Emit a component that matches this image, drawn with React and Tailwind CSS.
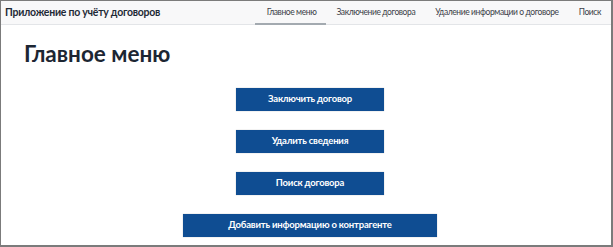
export default function App() {
  const tabs = ["Главное меню", "Заключение договора", "Удаление информации о договоре", "Поиск"];
  const buttons = [
    { label: "Заключить договор", w: "w-[148px]" },
    { label: "Удалить сведения", w: "w-[148px]" },
    { label: "Поиск договора", w: "w-[148px]" },
    { label: "Добавить информацию о контрагенте", w: "w-[254px]" },
  ];

  return (
    <div
      className="w-[613px] h-[247px] box-border border-l border-t border-r-2 border-b-2 border-[#7b7b7b] bg-white overflow-hidden"
      style={{ fontFamily: 'Lato, "Noto Sans", sans-serif' }}
    >
      <header className="h-[24px] flex items-stretch justify-between bg-[#f8f8f9] border-b border-[#e3e5e8]">
        <div className="pl-[4px] flex items-center whitespace-nowrap text-[10.5px] tracking-[-0.25px] font-bold text-[#1e2a36]">
          Приложение по учёту договоров
        </div>
        <nav className="flex items-stretch">
          {tabs.map((t, i) => (
            <div
              key={t}
              className={`flex items-center whitespace-nowrap px-[10px] text-[8.5px] tracking-[-0.4px] text-[#3c4148] ${
                i === 0 ? "border-b-2 border-[#a3aab0] pl-[12px] -mb-px" : ""
              }`}
            >
              {t}
            </div>
          ))}
        </nav>
      </header>

      <main className="pt-[13px]">
        <h1 className="pl-[23px] text-[22.5px] leading-[31px] font-bold text-[#1c2633]">Главное меню</h1>
        <div className="mt-[19px] pl-[8px] flex flex-col items-center gap-[19px]">
          {buttons.map((b) => (
            <button
              key={b.label}
              className={`${b.w} h-[23px] bg-[#0f4d92] text-white text-[9.5px] tracking-[-0.2px] font-bold flex items-center justify-center shadow-[0_0_1px_rgba(0,0,0,0.3)]`}
            >
              {b.label}
            </button>
          ))}
        </div>
      </main>
    </div>
  );
}
